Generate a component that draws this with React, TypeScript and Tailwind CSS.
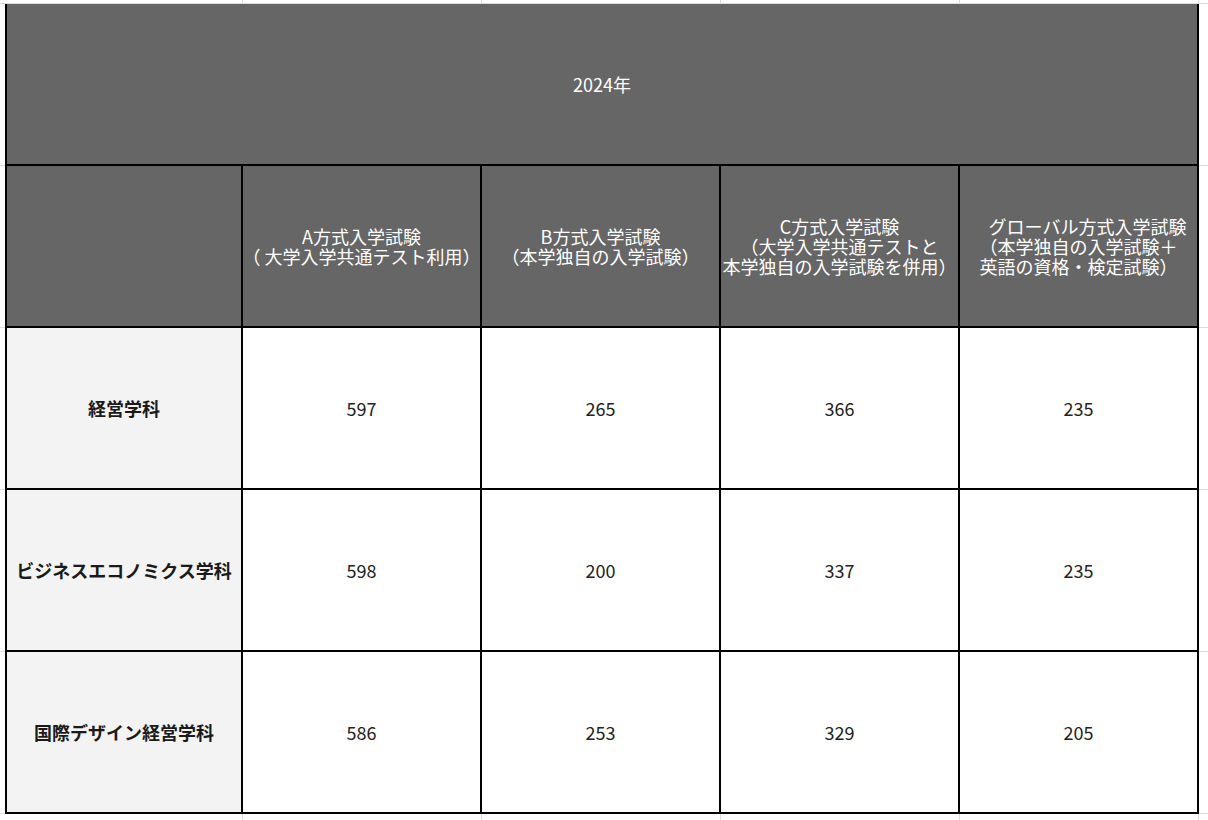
const font = { fontFamily: '"Noto Sans CJK JP", "Noto Sans", sans-serif' };

const methods: string[][] = [
  ["A方式入学試験", "（ 大学入学共通テスト利用）"],
  ["B方式入学試験", "（本学独自の入学試験）"],
  ["C方式入学試験", "（大学入学共通テストと", "本学独自の入学試験を併用）"],
  ["\u3000グローバル方式入学試験", "（本学独自の入学試験＋", "英語の資格・検定試験）"],
];

const rows: { name: string; counts: number[] }[] = [
  { name: "経営学科", counts: [597, 265, 366, 235] },
  { name: "ビジネスエコノミクス学科", counts: [598, 200, 337, 235] },
  { name: "国際デザイン経営学科", counts: [586, 253, 329, 205] },
];

// light spreadsheet gridline around the table
function Edge({ className = "" }: { className?: string }) {
  return <div className={`bg-white border-[#dcdcdc] ${className}`} />;
}

export default function App() {
  return (
    <div
      className="grid h-[820px] w-[1208px] overflow-hidden bg-white"
      style={{
        ...font,
        gridTemplateColumns: "5px 238px 239px 239px 239px 239px 1fr",
        gridTemplateRows: "4px 162px 162px 162px 162px 162px 1fr",
      }}
    >
      {/* top strip */}
      <Edge className="border-b" />
      <Edge className="border-b border-r" />
      <Edge className="border-b border-r" />
      <Edge className="border-b border-r" />
      <Edge className="border-b border-r" />
      <Edge className="border-b border-r" />
      <Edge className="border-b" />

      {/* year header */}
      <Edge className="border-b" />
      <div className="col-span-5 flex items-center justify-center border-x-2 border-b-2 border-black bg-[#666666] text-[18px] leading-5 text-white">
        2024年
      </div>
      <Edge className="border-b" />

      {/* method header */}
      <Edge className="border-b" />
      <div className="border-x-2 border-b-2 border-black bg-[#666666]" />
      {methods.map((lines, i) => (
        <div
          key={i}
          className="flex flex-col items-center justify-center border-r-2 border-b-2 border-black bg-[#666666] text-[18px] leading-5 text-white"
        >
          {lines.map((line) => (
            <span key={line} className="whitespace-pre">{line}</span>
          ))}
        </div>
      ))}
      <Edge className="border-b" />

      {rows.map((row) => (
        <div key={row.name} className="contents">
          <Edge className="border-b" />
          <div className="flex items-center justify-center whitespace-nowrap border-x-2 border-b-2 border-black bg-[#f3f3f3] text-[18px] font-bold text-[#1a1a1a]">
            {row.name}
          </div>
          {row.counts.map((n, i) => (
            <div
              key={i}
              className="flex items-center justify-center border-r-2 border-b-2 border-black bg-white text-[18px] text-[#222222]"
            >
              {n}
            </div>
          ))}
          <Edge className="border-b" />
        </div>
      ))}

      {/* bottom strip */}
      <Edge />
      <Edge className="border-r" />
      <Edge className="border-r" />
      <Edge className="border-r" />
      <Edge className="border-r" />
      <Edge className="border-r" />
      <Edge />
    </div>
  );
}
